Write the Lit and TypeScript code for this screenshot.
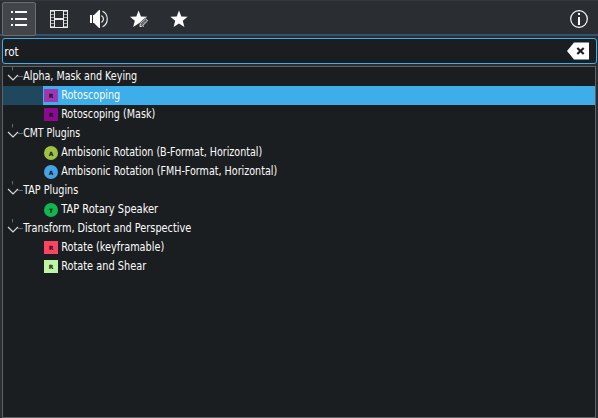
import { LitElement, html, css, svg } from "lit";
import { customElement } from "lit/decorators.js";
import { classMap } from "lit/directives/class-map.js";

interface Row { label: string; w: number; letter?: string; color?: string; round?: boolean; selected?: boolean; }

const rows: Row[] = [
  { label: "Alpha, Mask and Keying", w: 115 },
  { label: "Rotoscoping", w: 60, letter: "R", color: "#9c36b4", selected: true },
  { label: "Rotoscoping (Mask)", w: 95, letter: "R", color: "#8b0a8f" },
  { label: "CMT Plugins", w: 58 },
  { label: "Ambisonic Rotation (B-Format, Horizontal)", w: 202, letter: "A", color: "#9fc148", round: true },
  { label: "Ambisonic Rotation (FMH-Format, Horizontal)", w: 217, letter: "A", color: "#46a4e6", round: true },
  { label: "TAP Plugins", w: 56 },
  { label: "TAP Rotary Speaker", w: 98, letter: "T", color: "#12b650", round: true },
  { label: "Transform, Distort and Perspective", w: 169 },
  { label: "Rotate (keyframable)", w: 104, letter: "R", color: "#fa4461" },
  { label: "Rotate and Shear", w: 86, letter: "R", color: "#bdf5a4" },
];

const star = "M9 0.5L11.3 6.4L17.6 6.8L12.8 10.8L14.4 17L9 13.6L3.6 17L5.2 10.8L0.4 6.8L6.7 6.4Z";

@customElement("app-root")
export class AppRoot extends LitElement {
  static styles = css`
    :host { display: flex; flex-direction: column; box-sizing: border-box; width: 598px; height: 418px; overflow: hidden;
      background: #2a2e32; color: #fcfcfc; font: 11.4px/19px "DejaVu Sans Condensed", "DejaVu Sans", sans-serif; font-stretch: condensed; padding: 0 1px 0 2px; border-top: 1px solid #34373b; }
    svg { display: block; flex: none; }
    .bar { display: flex; height: 32px; margin: 0 -1px 0 -2px; padding: 1px 0 0 2px; border-bottom: 2px solid #2d5570; flex: none; }
    .tool { display: flex; align-items: center; justify-content: center; width: 34px; height: 34px; box-sizing: border-box; margin-right: 6px; border: 1px solid transparent; border-radius: 2px; flex: none; }
    .tool.on { background: #42464a; border-color: #6b6f73; }
    .info { margin-left: auto; margin-right: 2px; }
    .search { display: flex; align-items: center; justify-content: space-between; height: 26px; box-sizing: border-box; flex: none;
      margin: 2px 0; border: 1px solid #3daee9; border-radius: 3px; background: #1b1e20; padding: 0 7px 0 1px; }
    .list { flex: 1; border: 1px solid #5e6265; margin-right: 1px; background: #1b1e20; min-height: 0; }
    .row { display: flex; align-items: flex-start; height: 19px; }
    .twist { margin-left: 4px; }
    .selected { background: linear-gradient(to right, #1f485e 0 40px, #3daee9 40px); }
    .badge { display: flex; align-items: center; justify-content: center; width: 14px; height: 13px; margin: 3px 3px 0 41px; color: #111; font: bold 6px/13px "DejaVu Sans", sans-serif; flex: none; }
    .round { border-radius: 50%; height: 14px; }
    .text { display: block; overflow: visible; fill: #fcfcfc; }
  `;

  icon(content: unknown) {
    return svg`<svg width="18" height="18" viewBox="0 0 18 18">${content}</svg>`;
  }

  renderRow(r: Row) {
    const text = html`<svg class="text" width=${r.w} height="19"><text x="0.2" y="12.6" textLength=${r.w - 1} lengthAdjust="spacingAndGlyphs">${r.label}</text></svg>`;
    if (!r.letter) {
      return html`<div class="row">
        <svg class="twist" width="16" height="19" fill="none"><path d="M5.5 0V3.5M11 9.5H16" stroke="#65696c"/><path d="M1 8L6 13L11 8" stroke="#d8d9da" stroke-width="1.2"/></svg>${text}</div>`;
    }
    return html`<div class=${classMap({ row: true, selected: !!r.selected })}>
      <span class=${classMap({ badge: true, round: !!r.round })} style="background:${r.color}">${r.letter}</span>${text}</div>`;
  }

  render() {
    return html`
      <div class="bar">
        <div class="tool on">${this.icon(svg`<g fill="#fcfcfc"><rect x="1" y="1" width="2" height="2"/><rect x="5" y="1" width="12" height="2"/><rect x="1" y="8" width="2" height="2"/><rect x="5" y="8" width="12" height="2"/><rect x="1" y="14" width="2" height="2"/><rect x="5" y="14" width="12" height="2"/></g>`)}</div>
        <div class="tool">${this.icon(svg`<g fill="none" stroke="#e8e9e9"><path d="M.5 0V18M4.5 0V18M13.5 0V18M17.5 0V18M0 .5H18M0 17.5H18"/><path d="M4 9H14" stroke-width="2"/><path d="M2.5 1V17M15.5 1V17" stroke-width="3" stroke-dasharray="1 2" stroke="#a5a7a9"/></g>`)}</div>
        <div class="tool">${this.icon(svg`<path d="M0 5H2V13H0ZM3 5H4L9 0H10V18H9L4 13H3Z" fill="#fcfcfc"/><path d="M11.5 5.5Q15.5 9 11.5 12.5M12.5 1.2C18.8 4 18.8 14 12.5 16.8" fill="none" stroke="#e8e9e9" stroke-width="1.2"/>`)}</div>
        <div class="tool">${this.icon(svg`<path d=${star} transform="translate(-.4 0)" fill="#fcfcfc"/><path d="M8.5 18L9 13.5L15.5 7.5L18 10.5L12.3 17Z" fill="#2a2e32"/><path d="M10 16.7L10.4 13.8L15.6 8.8L17.6 10.8L12.4 15.9Z" fill="none" stroke="#e8e9e9"/><path d="M11.5 15L16 10.5" stroke="#e8e9e9" stroke-width=".7"/>`)}</div>
        <div class="tool">${this.icon(svg`<path d=${star} fill="#fcfcfc"/>`)}</div>
        <div class="tool info">${this.icon(svg`<circle cx="9" cy="9" r="8.3" fill="none" stroke="#fcfcfc" stroke-width="1.2"/><path d="M8 3H10V5H8ZM8 7H10V15H8Z" fill="#fcfcfc"/>`)}</div>
      </div>
      <div class="search">
        <svg class="text" width="16" height="18"><text x="0.2" y="14" textLength="14.5" lengthAdjust="spacingAndGlyphs">rot</text></svg>
        <svg width="22" height="18"><path d="M0 9L7 .5H22V17.5H7Z" fill="#fcfcfc"/><path d="M10.3 6L16.7 12M16.7 6L10.3 12" stroke="#1b1e20" stroke-width="2.2"/></svg>
      </div>
      <div class="list">${rows.map((r) => this.renderRow(r))}</div>`;
  }
}
